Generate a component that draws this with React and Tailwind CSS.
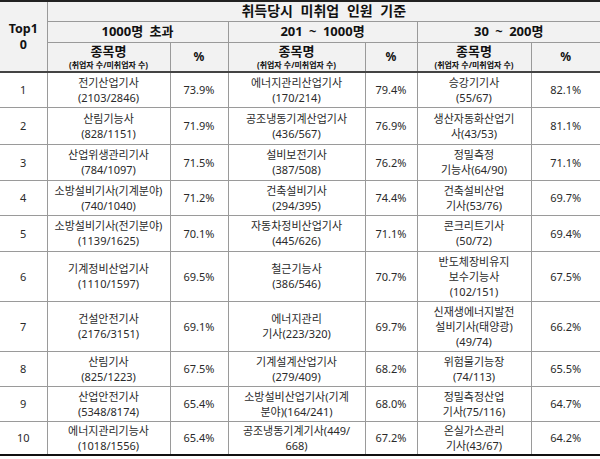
const rows = [
  [1, ["전기산업기사", "(2103/2846)"], "73.9%", ["에너지관리산업기사", "(170/214)"], "79.4%", ["승강기기사", "(55/67)"], "82.1%", "h-[35px]"],
  [2, ["산림기능사", "(828/1151)"], "71.9%", ["공조냉동기계산업기사", "(436/567)"], "76.9%", ["생산자동화산업기", "사(43/53)"], "81.1%", "h-[37px]"],
  [3, ["산업위생관리기사", "(784/1097)"], "71.5%", ["설비보전기사", "(387/508)"], "76.2%", ["정밀측정", "기능사(64/90)"], "71.1%", "h-[36px]"],
  [4, ["소방설비기사(기계분야)", "(740/1040)"], "71.2%", ["건축설비기사", "(294/395)"], "74.4%", ["건축설비산업", "기사(53/76)"], "69.7%", "h-[35px]"],
  [5, ["소방설비기사(전기분야)", "(1139/1625)"], "70.1%", ["자동차정비산업기사", "(445/626)"], "71.1%", ["콘크리트기사", "(50/72)"], "69.4%", "h-[36px]"],
  [6, ["기계정비산업기사", "(1110/1597)"], "69.5%", ["철근기능사", "(386/546)"], "70.7%", ["반도체장비유지", "보수기능사", "(102/151)"], "67.5%", "h-[50px]"],
  [7, ["건설안전기사", "(2176/3151)"], "69.1%", ["에너지관리", "기사(223/320)"], "69.7%", ["신재생에너지발전", "설비기사(태양광)", "(49/74)"], "66.2%", "h-[50px]"],
  [8, ["산림기사", "(825/1223)"], "67.5%", ["기계설계산업기사", "(279/409)"], "68.2%", ["위험물기능장", "(74/113)"], "65.5%", "h-[35px]"],
  [9, ["산업안전기사", "(5348/8174)"], "65.4%", ["소방설비산업기사(기계", "분야)(164/241)"], "68.0%", ["정밀측정산업", "기사(75/116)"], "64.7%", "h-[35px]"],
  [10, ["에너지관리기능사", "(1018/1556)"], "65.4%", ["공조냉동기계기사(449/", "668)"], "67.2%", ["온실가스관리", "기사(43/67)"], "64.2%", "h-[34px]"],
];

function Lines({ lines }) {
  return lines.map((l, i) => (
    <div key={i} className="whitespace-nowrap">{l}</div>
  ));
}

function NameHead() {
  return (
    <th className="border border-[#9a9a9a] border-b-2 border-b-[#444] font-bold p-0 leading-[15px]">
      <div className="text-[13px]">종목명</div>
      <div className="text-[8px] leading-[11px]">(취업자 수/미취업자 수)</div>
    </th>
  );
}

function PctHead() {
  return (
    <th className="border border-[#9a9a9a] border-b-2 border-b-[#444] font-bold text-[12px] p-0">%</th>
  );
}

export default function App() {
  const cell = "border border-[#9a9a9a] p-0 text-center align-middle";

  return (
    <div className="w-[600px] h-[459px] bg-white overflow-hidden" style={{ fontFamily: '"Noto Sans", "Noto Sans CJK KR", sans-serif' }}>
      <table className="w-[600px] table-fixed border-collapse border-t-2 border-t-[#222] border-b-2 border-b-[#111]">
        <colgroup>
          <col className="w-[47px]" />
          <col className="w-[123px]" />
          <col className="w-[58px]" />
          <col className="w-[137px]" />
          <col className="w-[52px]" />
          <col className="w-[114px]" />
          <col className="w-[69px]" />
        </colgroup>
        <thead className="bg-[#f2f2f2] text-[#111]">
          <tr className="h-[20px]">
            <th rowSpan={3} className="border-r border-r-[#9a9a9a] border-b-2 border-b-[#444] font-bold text-[12.5px] leading-[16px] p-0">
              Top1<br />0
            </th>
            <th colSpan={6} className="border border-[#9a9a9a] border-t-0 border-r-0 font-bold text-[14px] leading-[18px] p-0 [word-spacing:4px]">
              취득당시 미취업 인원 기준
            </th>
          </tr>
          <tr className="h-[21px]">
            <th colSpan={2} className="border border-[#9a9a9a] font-bold text-[13px] p-0 [word-spacing:3px]">1000명 초과</th>
            <th colSpan={2} className="border border-[#9a9a9a] font-bold text-[13px] p-0 [word-spacing:3px]">201 ~ 1000명</th>
            <th colSpan={2} className="border border-[#9a9a9a] border-r-0 font-bold text-[13px] p-0 [word-spacing:3px]">30 ~ 200명</th>
          </tr>
          <tr className="h-[30px]">
            <NameHead />
            <PctHead />
            <NameHead />
            <PctHead />
            <NameHead />
            <th className="border border-[#9a9a9a] border-r-0 border-b-2 border-b-[#444] font-bold text-[12px] p-0">%</th>
          </tr>
        </thead>
        <tbody className="text-[11px] leading-[15px] text-[#2a2a2a]">
          {rows.map((r) => (
            <tr key={r[0]} className={r[7]}>
              <td className="border-r border-b border-[#9a9a9a] p-0 text-center align-middle">{r[0]}</td>
              <td className={cell}><Lines lines={r[1]} /></td>
              <td className={cell}>{r[2]}</td>
              <td className={cell}><Lines lines={r[3]} /></td>
              <td className={cell}>{r[4]}</td>
              <td className={cell}><Lines lines={r[5]} /></td>
              <td className="border-b border-l border-[#9a9a9a] p-0 text-center align-middle">{r[6]}</td>
            </tr>
          ))}
        </tbody>
      </table>
    </div>
  );
}
